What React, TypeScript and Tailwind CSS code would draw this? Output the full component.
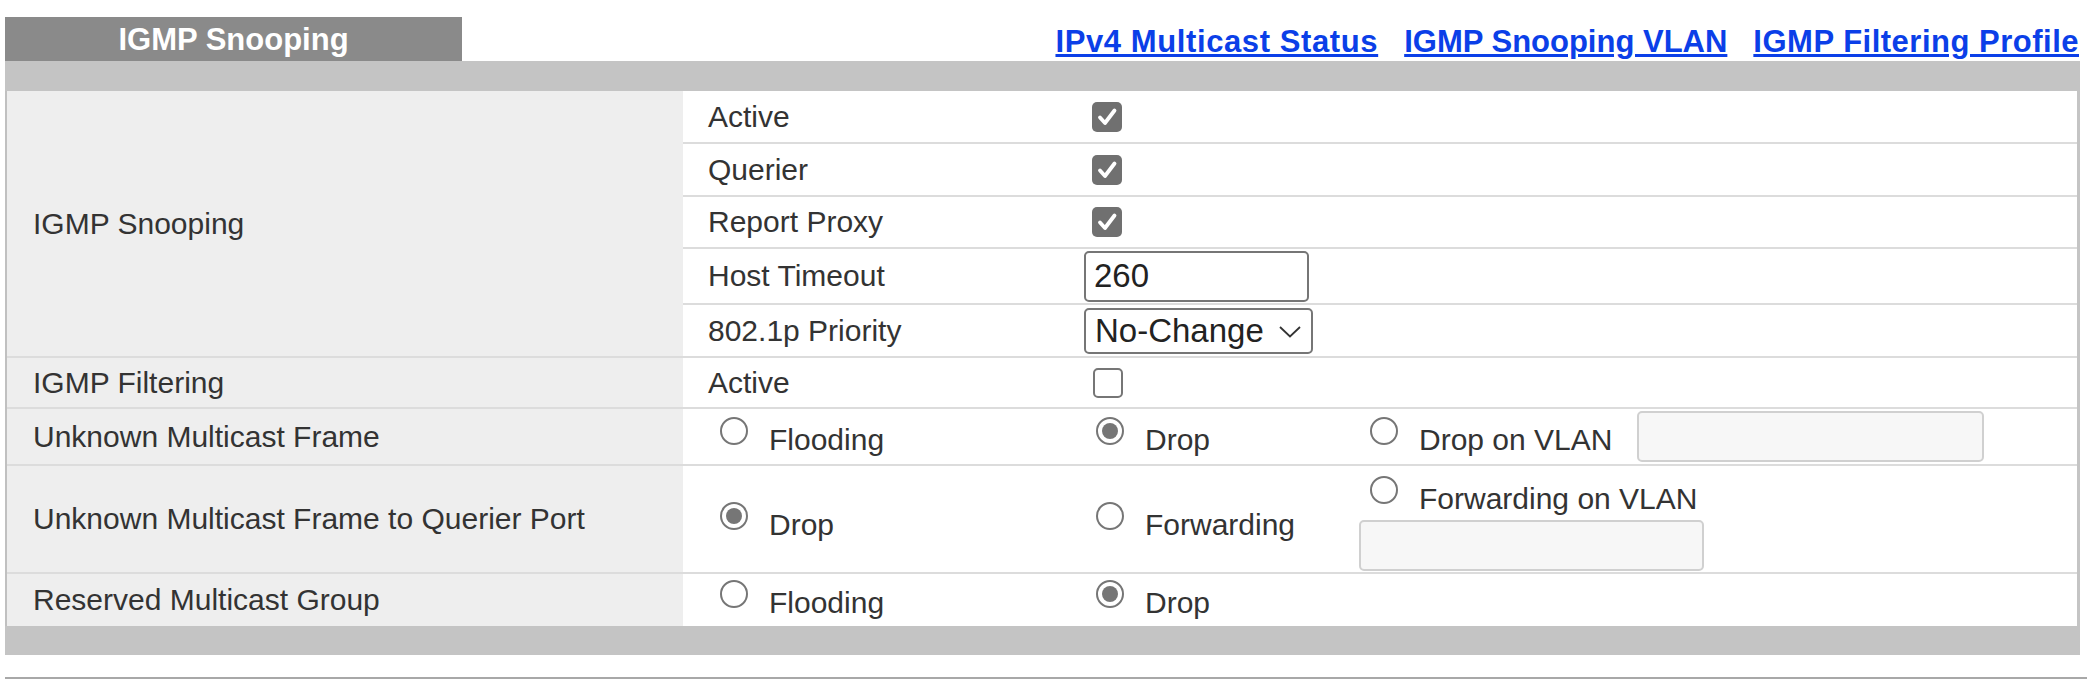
import React from 'react';

const font = { fontFamily: '"Liberation Sans", Arial, sans-serif' };

function Checkbox({ checked }: { checked: boolean }) {
  return checked ? (
    <span className="ml-[8px] inline-flex h-[30px] w-[30px] items-center justify-center rounded-[5px] bg-[#707070]">
      <svg width="30" height="30" viewBox="0 0 30 30">
        <path d="M8 15.5 L13 21 L22.5 8.5" fill="none" stroke="#ffffff" strokeWidth="3.8" strokeLinecap="round" strokeLinejoin="round" />
      </svg>
    </span>
  ) : (
    <span className="ml-[9px] inline-block h-[30px] w-[30px] rounded-[5px] border-2 border-[#767676] bg-white" />
  );
}

function Radio({ checked, label }: { checked?: boolean; label: string }) {
  return (
    <span className="flex items-center">
      <span className="mb-[12px] mr-[21px] flex h-[28px] w-[28px] shrink-0 items-center justify-center rounded-full border-2 border-[#767676] bg-white">
        {checked && <span className="h-[16px] w-[16px] rounded-full bg-[#767676]" />}
      </span>
      <span className="mt-[6px] whitespace-nowrap">{label}</span>
    </span>
  );
}

function SubRow({ label, h, children }: { label: string; h: string; children: React.ReactNode }) {
  return (
    <div className={`flex items-center bg-white ${h}`}>
      <div className="w-[401px] shrink-0 pl-[25px]">{label}</div>
      <div className="flex items-center">{children}</div>
    </div>
  );
}

function LeftCell({ children }: { children: React.ReactNode }) {
  return <div className="flex w-[676px] shrink-0 items-center bg-[#eeeeee] pl-[26px]">{children}</div>;
}

export default function App() {
  return (
    <div className="h-[680px] w-full overflow-hidden bg-white text-[30px] leading-[30px] text-[#333333]" style={font}>
      {/* header */}
      <div className="flex items-end justify-between pl-[5px] pr-[8px] pt-[17px]">
        <div className="flex h-[44px] w-[457px] items-center justify-center bg-[#8a8a8a] text-[31px] font-bold leading-[31px] text-white">
          IGMP Snooping
        </div>
        <div className="mb-[4px] flex gap-[26px] text-[31px] font-bold leading-[31px] text-[#0b3fe8]">
          <a href="#" className="tracking-[0.6px] underline">IPv4 Multicast Status</a>
          <a href="#" className="underline">IGMP Snooping VLAN</a>
          <a href="#" className="tracking-[0.5px] underline">IGMP Filtering Profile</a>
        </div>
      </div>
      <div className="ml-[5px] mr-[7px] h-[30px] bg-[#c4c4c4]" />

      {/* table */}
      <div className="ml-[5px] mr-[7px] flex flex-col gap-[2px] border-l-2 border-r-[3px] border-l-[#c0c0c0] border-r-[#c4c4c4] bg-[#dcdcdc]">
        <div className="flex">
          <LeftCell>IGMP Snooping</LeftCell>
          <div className="flex flex-1 flex-col gap-[2px]">
            <SubRow label="Active" h="h-[51px]"><Checkbox checked /></SubRow>
            <SubRow label="Querier" h="h-[51px]"><Checkbox checked /></SubRow>
            <SubRow label="Report Proxy" h="h-[50px]"><Checkbox checked /></SubRow>
            <SubRow label="Host Timeout" h="h-[54px]">
              <input
                type="text"
                defaultValue="260"
                className="h-[51px] w-[225px] rounded-[5px] border-2 border-[#767676] bg-white pl-[8px] text-[33px] text-[#222222] outline-none"
                style={font}
              />
            </SubRow>
            <SubRow label="802.1p Priority" h="h-[51px]">
              <div className="relative">
                <select
                  defaultValue="No-Change"
                  className="h-[46px] w-[229px] appearance-none rounded-[5px] border-2 border-[#767676] bg-white py-0 pl-[9px] text-[33px] leading-[38px] text-[#222222] outline-none"
                  style={font}
                >
                  <option>No-Change</option>
                </select>
                <svg className="pointer-events-none absolute left-[195px] top-[18px]" width="22" height="12" viewBox="0 0 22 12">
                  <path d="M1 1 L11 10.5 L21 1" fill="none" stroke="#333333" strokeWidth="1.8" />
                </svg>
              </div>
            </SubRow>
          </div>
        </div>

        <div className="flex h-[49px]">
          <LeftCell>IGMP Filtering</LeftCell>
          <div className="flex flex-1 items-center bg-white">
            <div className="w-[401px] shrink-0 pl-[25px]">Active</div>
            <Checkbox checked={false} />
          </div>
        </div>

        <div className="flex h-[55px]">
          <LeftCell>Unknown Multicast Frame</LeftCell>
          <div className="flex flex-1 items-center bg-white">
            <div className="w-[401px] shrink-0 pl-[37px]"><Radio label="Flooding" /></div>
            <div className="w-[275px] shrink-0 pl-[12px]"><Radio checked label="Drop" /></div>
            <div className="flex items-center pl-[11px]">
              <Radio label="Drop on VLAN" />
              <input
                type="text"
                className="ml-[25px] h-[51px] w-[347px] rounded-[5px] border-2 border-[#d0d0d0] bg-[#f7f7f7] outline-none"
              />
            </div>
          </div>
        </div>

        <div className="flex h-[106px]">
          <LeftCell>Unknown Multicast Frame to Querier Port</LeftCell>
          <div className="flex flex-1 bg-white">
            <div className="flex w-[401px] shrink-0 items-center pl-[37px] pt-[6px]"><Radio checked label="Drop" /></div>
            <div className="flex w-[275px] shrink-0 items-center pl-[12px] pt-[6px]"><Radio label="Forwarding" /></div>
            <div className="flex flex-col pt-[10px]">
              <div className="pl-[11px]"><Radio label="Forwarding on VLAN" /></div>
              <input
                type="text"
                className="mt-[4px] h-[51px] w-[345px] shrink-0 rounded-[5px] border-2 border-[#d0d0d0] bg-[#f7f7f7] outline-none"
              />
            </div>
          </div>
        </div>

        <div className="flex h-[52px]">
          <LeftCell>Reserved Multicast Group</LeftCell>
          <div className="flex flex-1 items-center bg-white">
            <div className="w-[401px] shrink-0 pl-[37px]"><Radio label="Flooding" /></div>
            <div className="w-[275px] shrink-0 pl-[12px]"><Radio checked label="Drop" /></div>
          </div>
        </div>
      </div>
      <div className="ml-[5px] mr-[7px] h-[29px] bg-[#c4c4c4]" />
      <div className="ml-[5px] mt-[22px] h-[2px] bg-[#a8a8a8]" />
    </div>
  );
}
